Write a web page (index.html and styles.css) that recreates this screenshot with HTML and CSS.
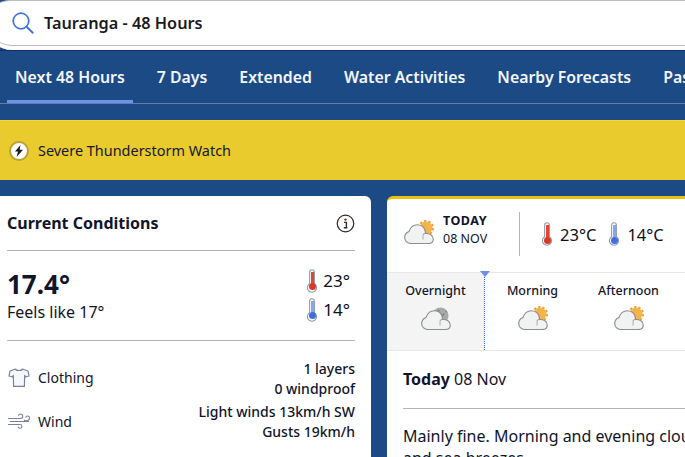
FILE: index.html
```html
<!DOCTYPE html>
<html lang="en">
<head>
<meta charset="utf-8">
<title>Tauranga - 48 Hours</title>
<link rel="stylesheet" href="styles.css">
</head>
<body>
<svg width="0" height="0" class="defs">
  <defs>
    <symbol id="therm" viewBox="0 0 12 24">
      <path d="M3.600 3.200a2.400 2.400 0 0 1 4.800 0v11.600a4.600 4.600 0 1 1-4.800 0z" fill="#fff" stroke="#8f9bb5" stroke-width="1.100"/>
    </symbol>
    <symbol id="cloud" viewBox="0 0 30 20">
      <path d="M7 19.500C3 19.500.7 16.500.7 13.500.7 10.500 2.500 8.500 5 7.500 6.500 3 10 .7 13.500.7 18.500.7 21.500 4.500 21.500 9.500 25.500 9 29.300 11.500 29.300 15 29.300 17.500 27.500 19.500 24.500 19.500z" fill="#f1f2f2" stroke="#8d8d8d" stroke-width="1.100"/>
      <path d="M19 10.500v5" fill="none" stroke="#a5a5a5" stroke-width="0.900"/>
      <path d="M19 10.500c.8-.7 1.600-1 2.500-1" fill="none" stroke="#8d8d8d" stroke-width="1"/>
    </symbol>
    <symbol id="sun" viewBox="0 0 20 20">
      <circle cx="10" cy="10" r="8.800" fill="none" stroke="#e5a23a" stroke-width="2.400" stroke-dasharray="3 2.530"/>
      <circle cx="10" cy="10" r="8" fill="#f4b44a"/>
    </symbol>
  </defs>
</svg>

<header class="search">
  <svg class="search-icon" width="24" height="24" viewBox="0 0 24 24" aria-hidden="true">
    <circle cx="10" cy="10" r="7.800" fill="none" stroke="#3f73e0" stroke-width="1.700"/>
    <path d="M15.600 15.800l6.600 6.400" fill="none" stroke="#3f73e0" stroke-width="1.900"/>
  </svg>
  <span class="search-text">Tauranga - 48 Hours</span>
</header>

<nav class="tabs">
  <a class="tab active">Next 48 Hours</a>
  <a class="tab">7 Days</a>
  <a class="tab">Extended</a>
  <a class="tab">Water Activities</a>
  <a class="tab">Nearby Forecasts</a>
  <a class="tab">Past Weather</a>
</nav>

<section class="alert">
  <span class="alert-icon">
    <svg width="10" height="12" viewBox="0 0 10 12" aria-hidden="true"><path d="M6.500 0L1 6.600h3L2.600 12 9 4.800H5.600z" fill="#1a1a22"/></svg>
  </span>
  <span>Severe Thunderstorm Watch</span>
</section>

<main class="columns">
  <section class="card current">
    <div class="current-head">
      <h2>Current Conditions</h2>
      <svg width="19" height="19" viewBox="0 0 19 19" aria-hidden="true">
        <circle cx="9.500" cy="9.500" r="8.300" fill="#fff" stroke="#2a2a33" stroke-width="1.200"/>
        <circle cx="9.500" cy="5.600" r="1.200" fill="#6b3a1e"/>
        <path d="M8 8.400h2.400v5.200M7.800 13.800h3.600" fill="none" stroke="#3a2a22" stroke-width="1.400"/>
      </svg>
    </div>
    <div class="temps">
      <div>
        <div class="temp-now">17.4°</div>
        <div class="feels">Feels like 17°</div>
      </div>
      <div class="minmax">
        <div class="mm-row">
          <span class="therm hot"><svg width="12" height="24"><use href="#therm"/></svg><i></i></span>
          <span>23°</span>
        </div>
        <div class="mm-row">
          <span class="therm cold"><svg width="12" height="24"><use href="#therm"/></svg><i></i></span>
          <span>14°</span>
        </div>
      </div>
    </div>
    <div class="row clothing">
      <div class="row-label">
        <svg class="row-icon" width="24" height="20" viewBox="-1 0 24 20" aria-hidden="true">
          <path d="M7.500 1L2 3l-1 5 3.400 1 .9-1.600.3 11h10.800l.3-11 .9 1.600 3.400-1-1-5L14.500 1c-.5 2-6.500 2-7 0z" fill="#f7f8fb" stroke="#77819b" stroke-width="1.200" stroke-linejoin="round"/>
        </svg>
        <span>Clothing</span>
      </div>
      <div class="row-value">1 layers<br>0 windproof</div>
    </div>
    <div class="row wind">
      <div class="row-label">
        <svg class="row-icon" width="24" height="18" viewBox="0 0 24 18" aria-hidden="true">
          <path d="M1 6.500h12.500M3 9.500h19M1 12.500h12c2.500 0 2.500 3.800 0 3.800-1.300 0-1.800-1-1.700-1.600M13.500 6.500c3 0 3-4.500 0-4.500-1.500 0-2 1-2 1.800M17 8c1 1 5.500 1.500 5.500-2 0-2.500-3.500-2.500-3.800-.4" fill="none" stroke="#77819b" stroke-width="1.100"/>
        </svg>
        <span>Wind</span>
      </div>
      <div class="row-value">Light winds 13km/h SW<br>Gusts 19km/h</div>
    </div>
  </section>

  <section class="card forecast">
    <div class="day-head">
      <span class="wx-icon">
        <svg class="sun" width="16" height="16"><use href="#sun"/></svg>
        <svg class="cloud" width="30" height="20"><use href="#cloud"/></svg>
      </span>
      <div class="day-date"><b>TODAY</b><span>08 NOV</span></div>
      <div class="day-temps">
        <span class="therm hot"><svg width="12" height="24"><use href="#therm"/></svg><i></i></span>
        <span class="day-temp">23°C</span>
        <span class="therm cold"><svg width="12" height="24"><use href="#therm"/></svg><i></i></span>
        <span class="day-temp">14°C</span>
      </div>
    </div>
    <div class="periods">
      <div class="period past">
        <span class="period-name">Overnight</span>
        <span class="wx-icon">
          <svg class="moon" width="17" height="17" viewBox="0 0 18 18"><circle cx="9" cy="9" r="8.500" fill="#a9a9a9"/><circle cx="7" cy="4" r="1" fill="#777"/><circle cx="12" cy="8" r="1.200" fill="#7d7d7d"/><circle cx="15" cy="5" r=".8" fill="#777"/></svg>
          <svg class="cloud" width="30" height="20"><use href="#cloud"/></svg>
        </span>
        <span class="now-mark"></span>
      </div>
      <div class="period">
        <span class="period-name">Morning</span>
        <span class="wx-icon">
          <svg class="sun" width="16" height="16"><use href="#sun"/></svg>
          <svg class="cloud" width="30" height="20"><use href="#cloud"/></svg>
        </span>
      </div>
      <div class="period">
        <span class="period-name">Afternoon</span>
        <span class="wx-icon">
          <svg class="sun" width="16" height="16"><use href="#sun"/></svg>
          <svg class="cloud" width="30" height="20"><use href="#cloud"/></svg>
        </span>
      </div>
    </div>
    <div class="summary">
      <h3><b>Today</b> 08 Nov</h3>
      <p>Mainly fine. Morning and evening cloud, afternoon sun, and sea breezes.</p>
    </div>
  </section>
</main>
</body>
</html>
```
FILE: styles.css
```css
* { box-sizing: border-box; }
html, body { margin: 0; padding: 0; }
body {
  width: 685px;
  height: 457px;
  overflow: hidden;
  background: #1c4a85;
  font-family: "Noto Sans", "Open Sans", sans-serif;
  color: #10152b;
}
.defs { position: absolute; }

.search {
  height: 50px;
  margin-left: -14px;
  padding: 0 0 5px 24px;
  display: flex;
  align-items: center;
  gap: 9px;
  background: #fff;
  border-top: 1px solid #bdbdbd;
  border-left: 1px solid #bdbdbd;
  border-top-left-radius: 24px;
  border-bottom-left-radius: 26px;
  box-shadow: inset 0 -4px 0 #fff, inset 0 -5px 0 #bdbdbd;
}
.search-icon { flex: none; }
.search-text { font-size: 16.300px; font-weight: 600; color: #1a1a1f; }

.tabs {
  height: 54px;
  border-top: 1px solid #122f66;
  border-bottom: 1px solid #5f80aa;
  padding-left: 7px;
  display: flex;
  white-space: nowrap;
  overflow: hidden;
}
.tab {
  flex: none;
  padding: 15px 8px 0;
  margin-right: 16px;
  font-size: 15.850px;
  font-weight: 600;
  color: #f3f6fc;
  height: 53px;
}
.tab.active { box-shadow: inset 0 -4px 0 #6b93ec; }

.alert {
  margin-top: 16px;
  height: 60px;
  background: #e9cb2d;
  border-top: 1px solid #f0d63f;
  display: flex;
  align-items: center;
  gap: 9px;
  padding-left: 9px;
  font-size: 14.450px;
  color: #16182c;
}
.alert-icon {
  width: 20px;
  height: 20px;
  border-radius: 50%;
  background: #fff;
  border: 2px solid #b9a135;
  display: flex;
  align-items: center;
  justify-content: center;
}

.columns {
  margin-top: 16px;
  display: flex;
  gap: 16px;
  align-items: flex-start;
  margin-left: -10px;
}
.card { background: #fff; border-radius: 6px; height: 300px; overflow: hidden; flex: none; }

.current { width: 381px; padding: 0 16px 0 17px; }
.current-head {
  height: 55px;
  display: flex;
  align-items: center;
  justify-content: space-between;
  border-bottom: 1px solid #b5b5b5;
}
.current-head h2 { margin: 0; font-size: 16px; font-weight: 700; color: #10152b; }
.temps {
  height: 90px;
  border-bottom: 1px solid #b5b5b5;
  display: flex;
  justify-content: space-between;
  padding-top: 16px;
}
.temp-now { font-size: 26px; font-weight: 700; line-height: 34px; }
.feels { font-size: 16px; line-height: 22px; }
.minmax { margin-top: -1px; padding: 0 5px 0 0; font-size: 17px; color: #10101a; }
.mm-row { height: 29px; display: flex; align-items: center; gap: 5px; }

.therm { position: relative; display: block; width: 12px; height: 24px; flex: none; }
.therm svg { display: block; }
.therm i {
  position: absolute;
  left: 4.500px;
  top: 3px;
  width: 3px;
  height: 14px;
  background: #e5452f;
}
.therm::after {
  content: "";
  position: absolute;
  left: 2.500px;
  bottom: 2.500px;
  width: 7px;
  height: 7px;
  border-radius: 50%;
  background: #d93a28;
}
.therm.cold i { background: #84a6ee; }
.therm.cold::after { background: #3f6fdb; }

.row { display: flex; justify-content: space-between; align-items: center; font-size: 14px; }
.row.clothing { height: 47px; margin-top: 14px; }
.row.wind { height: 40px; }
.row-label { display: flex; align-items: center; gap: 7px; padding-bottom: 2px; }
.row-icon { flex: none; display: block; }
.row-value { text-align: right; font-weight: 500; line-height: 20px; color: #10152b; }

.forecast {
  width: 320px;
  border-top: 3px solid #e9c10f;
}
.day-head { height: 73px; display: flex; align-items: center; padding: 0 0 3px 17px; }
.wx-icon { position: relative; display: block; width: 30px; height: 20px; flex: none; }
.wx-icon .cloud { position: absolute; left: 0; top: 0; }
.wx-icon .sun { position: absolute; left: 14px; top: -4px; }
.wx-icon .moon { position: absolute; left: 11px; top: -3px; }
.day-date { margin: 0 0 8px 9px; width: 76px; display: flex; flex-direction: column; font-size: 12.500px; line-height: 18px; }
.day-date b { font-weight: 700; letter-spacing: .5px; }
.day-temps {
  height: 44px;
  border-left: 1px solid #b5b5b5;
  padding-left: 21px;
  display: flex;
  align-items: center;
  gap: 3px;
  font-size: 16.500px;
  color: #10101a;
}
.day-temp { margin: 0 9px 0 4px; }

.periods { height: 79px; display: flex; border-top: 1px solid #e8e8e8; border-bottom: 1px solid #e8e8e8; }
.period {
  position: relative;
  width: 95px;
  display: flex;
  flex-direction: column;
  align-items: center;
  padding-top: 9px;
  font-size: 12.500px;
  font-weight: 500;
}
.period:first-child { width: 98px; }
.period:nth-child(2) { width: 96px; padding-right: 1px; }
.period-name { line-height: 17px; color: #10152b; }
.period .wx-icon { margin-top: 11px; }
.period.past { background: #f4f4f4; border-right: 1px dotted #3a66e0; }
.now-mark {
  position: absolute;
  right: -6px;
  top: -2px;
  width: 0;
  height: 0;
  border-left: 5px solid transparent;
  border-right: 5px solid transparent;
  border-top: 6px solid #6b8fee;
}

.summary { padding: 0 0 0 16px; width: 460px; }
.summary h3 {
  margin: 0;
  height: 58px;
  padding-top: 16px;
  font-size: 16px;
  font-weight: 400;
  line-height: 24px;
  border-bottom: 1px solid #b5b5b5;
}
.summary h3 b { font-weight: 700; }
.summary p { margin: 16px 0 0; font-size: 16px; line-height: 22px; }
```
